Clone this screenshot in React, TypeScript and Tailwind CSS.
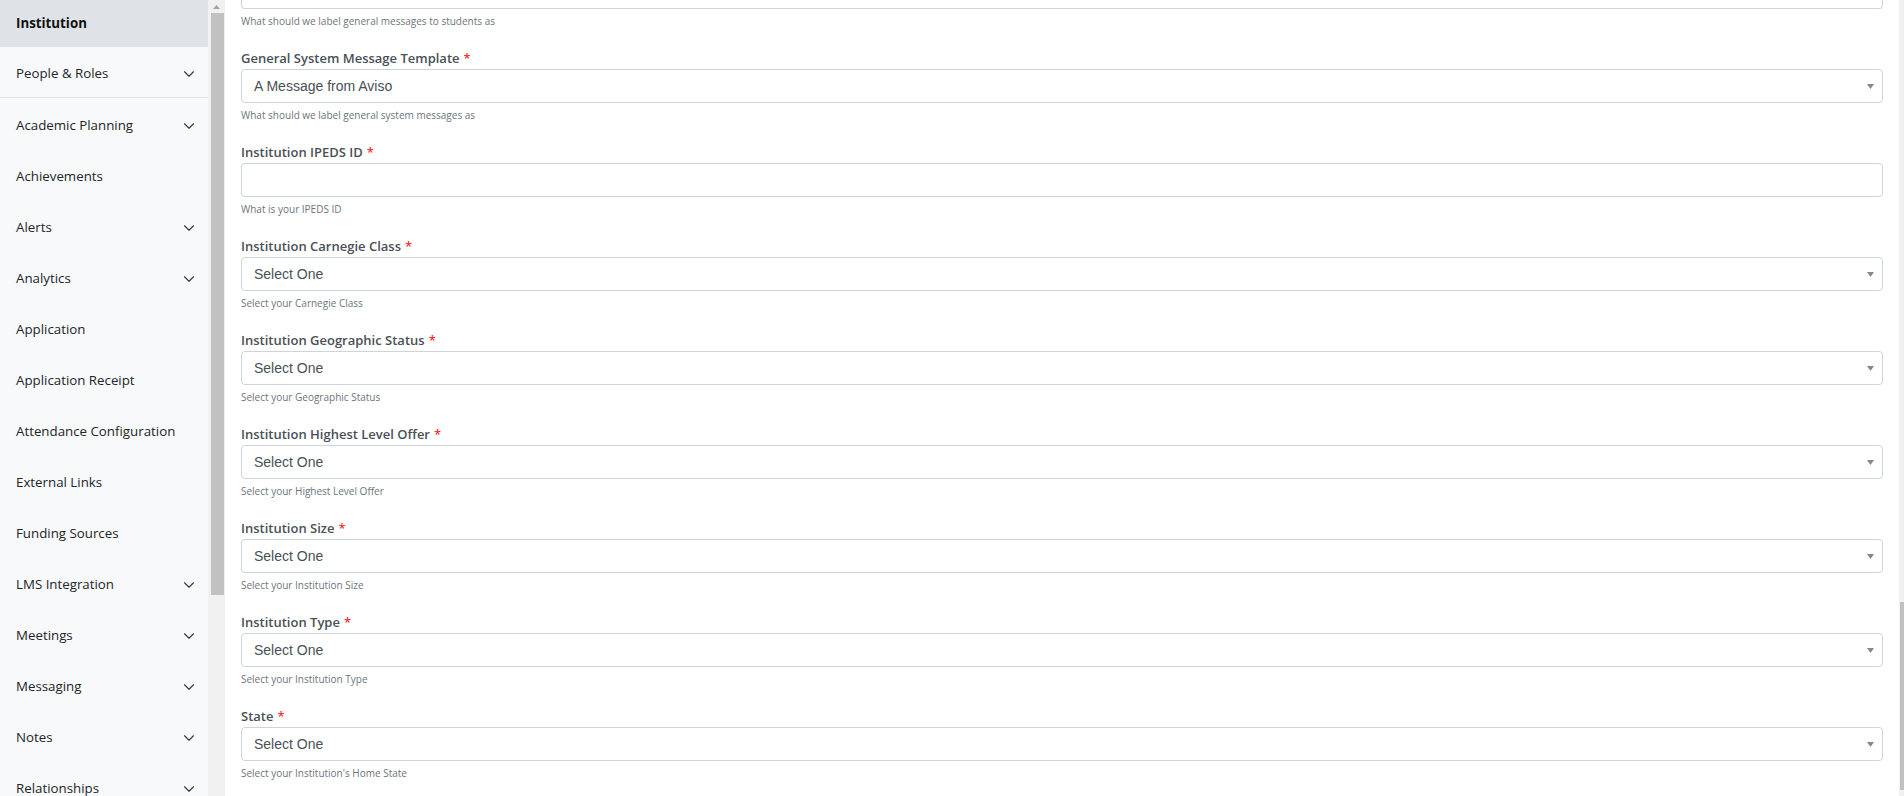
import { ChevronDown } from "lucide-react"

type NavItem = {
  label: string;
  children?: boolean;
}

type Field = {
  label: string;
  help: string;
  kind: "select" | "text";
  value?: string;
  scrolledAway?: boolean;
}

const navItems: NavItem[] = [
  { label: "Institution" },
  { label: "People & Roles", children: true },
  { label: "Academic Planning", children: true },
  { label: "Achievements" },
  { label: "Alerts", children: true },
  { label: "Analytics", children: true },
  { label: "Application" },
  { label: "Application Receipt" },
  { label: "Attendance Configuration" },
  { label: "External Links" },
  { label: "Funding Sources" },
  { label: "LMS Integration", children: true },
  { label: "Meetings", children: true },
  { label: "Messaging", children: true },
  { label: "Notes", children: true },
  { label: "Relationships", children: true },
]

// first field is scrolled mostly out of view, only its bottom edge + help text show
const fields: Field[] = [
  { label: "General Student Message Template", help: "What should we label general messages to students as", kind: "select", scrolledAway: true },
  { label: "General System Message Template", help: "What should we label general system messages as", kind: "select", value: "A Message from Aviso" },
  { label: "Institution IPEDS ID", help: "What is your IPEDS ID", kind: "text" },
  { label: "Institution Carnegie Class", help: "Select your Carnegie Class", kind: "select", value: "Select One" },
  { label: "Institution Geographic Status", help: "Select your Geographic Status", kind: "select", value: "Select One" },
  { label: "Institution Highest Level Offer", help: "Select your Highest Level Offer", kind: "select", value: "Select One" },
  { label: "Institution Size", help: "Select your Institution Size", kind: "select", value: "Select One" },
  { label: "Institution Type", help: "Select your Institution Type", kind: "select", value: "Select One" },
  { label: "State", help: "Select your Institution's Home State", kind: "select", value: "Select One" },
]

function Sidebar() {
  return (
    <div className="flex h-full shrink-0">
      <nav className="w-[208px] h-full overflow-hidden bg-[#f8f9fa] text-[13.3px] text-[#212529]">
        {navItems.map((item, i) => (
          <div
            key={item.label}
            className={
              i === 0
                ? "flex items-center h-[47px] pl-4 pr-[10px] bg-[#dfe3e7] font-bold text-[#111]"
                : i === 1
                ? "flex items-center justify-between h-[51px] pl-4 pr-[10px] pt-[4px] border-b border-[#dee2e6]"
                : "flex items-center justify-between h-[51px] pl-4 pr-[10px] pt-[4px]"
            }
          >
            <span>{item.label}</span>
            {item.children && <ChevronDown size={18} strokeWidth={1.5} className="text-[#343a40]" />}
          </div>
        ))}
      </nav>
      {/* sidebar scrollbar */}
      <div className="w-[17px] h-full bg-[#f1f1f1] flex flex-col items-center">
        <div className="h-[13px] w-full flex items-center justify-center">
          <svg width="7" height="4" viewBox="0 0 7 4">
            <polygon points="3.5,0 7,4 0,4" fill="#a3a3a3" />
          </svg>
        </div>
        <div className="w-[13px] h-[582px] bg-[#c1c1c1] ml-[2px]" />
      </div>
    </div>
  )
}

function FormField({ field }: { field: Field }) {
  if (field.scrolledAway) {
    return (
      <div className="pb-5">
        <div className="h-[9px] border border-t-0 border-[#ced4da] rounded-b-[4px] bg-white" />
        <div className="mt-1 h-4 flex items-center pt-[1px] text-[10px] text-[#6c757d]">{field.help}</div>
      </div>
    )
  }

  return (
    <div className="pb-5">
      <div className="h-5 flex items-center text-[13px] font-semibold text-[#495057]">
        {field.label}
        <span className="ml-1 text-[#ff0000] font-normal">*</span>
      </div>
      <div className="h-[34px] border border-[#ced4da] rounded-[4px] bg-white flex items-center justify-between pl-[12px] pr-[8px] font-['Liberation_Sans',Arial,sans-serif] text-[14px] text-[#495057]">
        <span>{field.kind === "select" ? field.value : ""}</span>
        {field.kind === "select" && (
          <svg width="7" height="5" viewBox="0 0 7 5">
            <polygon points="0,0 7,0 3.5,5" fill="#888" />
          </svg>
        )}
      </div>
      <div className="mt-1 h-4 flex items-center pt-[1px] text-[10px] text-[#6c757d]">{field.help}</div>
    </div>
  )
}

export default function App() {
  return (
    <div className="flex w-[1904px] h-[796px] overflow-hidden bg-white font-['Open_Sans',sans-serif]">
      <Sidebar />
      <main className="flex-1 h-full overflow-hidden px-4">
        {fields.map((f) => (
          <FormField key={f.label} field={f} />
        ))}
      </main>
      {/* page scrollbar */}
      <div className="w-[5px] h-full bg-[#f1f1f1] flex flex-col">
        <div className="h-[602px]" />
        <div className="h-[188px] ml-[1px] bg-[#c1c1c1]" />
      </div>
    </div>
  )
}
